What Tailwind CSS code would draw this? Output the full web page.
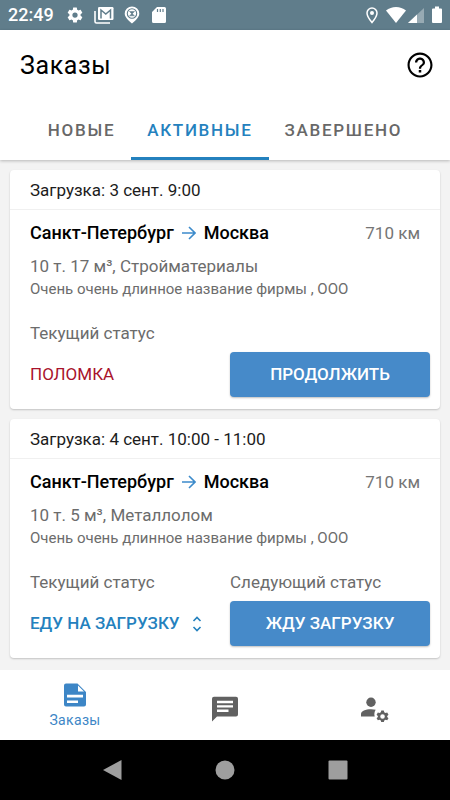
<!DOCTYPE html>
<html lang="ru">
<head>
<meta charset="utf-8">
<meta name="viewport" content="width=device-width, initial-scale=1">
<title>Заказы</title>
<script src="https://cdn.jsdelivr.net/npm/@tailwindcss/browser@4"></script>
</head>
<body class="flex min-h-screen flex-col bg-[#f3f3f3] font-[Roboto,sans-serif] text-[17px] text-[#1c1c1c]">

<!-- System status bar -->
<div class="flex h-[30px] items-center justify-between bg-[#607d8b] px-2 text-white">
  <div class="flex items-center gap-2.5">
    <span class="w-[48px] text-[18px] leading-[30px] font-medium">22:49</span>
    <svg class="size-[18px]" viewBox="0 0 24 24" fill="currentColor"><path d="M19.43 12.98c.04-.32.07-.64.07-.98s-.03-.66-.07-.98l2.11-1.65c.19-.15.24-.42.12-.64l-2-3.46c-.12-.22-.39-.3-.61-.22l-2.49 1c-.52-.4-1.08-.73-1.69-.98l-.38-2.65A.49.49 0 0 0 14 2h-4c-.25 0-.46.18-.49.42l-.38 2.65c-.61.25-1.17.59-1.69.98l-2.49-1c-.23-.09-.49 0-.61.22l-2 3.46c-.13.22-.07.49.12.64l2.11 1.65c-.04.32-.07.65-.07.98s.03.66.07.98l-2.11 1.65c-.19.15-.24.42-.12.64l2 3.46c.12.22.39.3.61.22l2.49-1c.52.4 1.08.73 1.69.98l.38 2.65c.03.24.24.42.49.42h4c.25 0 .46-.18.49-.42l.38-2.65c.61-.25 1.17-.59 1.69-.98l2.49 1c.23.09.49 0 .61-.22l2-3.46c.12-.22.07-.49-.12-.64zM12 15.5a3.5 3.5 0 1 1 0-7 3.5 3.5 0 0 1 0 7z"/></svg>
    <svg class="h-[18px] w-5" viewBox="0 0 20 18"><path d="M1 5v10.500a1.500 1.500 0 0 0 1.500 1.500H16" fill="none" stroke="currentColor" stroke-width="1.600"/><rect x="4" y="1" width="15.500" height="13" rx="1.200" fill="currentColor"/><path d="M7 12.500V4l4.800 4L16.500 4v8.500" fill="none" stroke="#607d8b" stroke-width="1.500"/></svg>
    <svg class="h-[18px] w-4" viewBox="0 0 16 18"><path d="M8 .5A7.300 7.300 0 0 0 .7 7.700C.7 12 8 17.500 8 17.500s7.300-5.500 7.300-9.800A7.300 7.300 0 0 0 8 .5z" fill="currentColor"/><circle cx="8" cy="7.500" r="4.700" fill="none" stroke="#607d8b" stroke-width="1.100"/><path d="M5.500 5.500h5L8 8zM5.500 9.800h5L8 7.500z" fill="#607d8b" stroke="#607d8b" stroke-width=".5"/></svg>
    <svg class="ml-0.5 h-[18px] w-[14px]" viewBox="0 0 14 18"><path d="M5 1h7.500A1.500 1.500 0 0 1 14 2.500v13a1.500 1.500 0 0 1-1.500 1.500h-11A1.500 1.500 0 0 1 0 15.500V6z" fill="currentColor"/><path d="M5.500 3v3M8.300 3v3M11 3v3" stroke="#607d8b" stroke-width="1.200"/></svg>
  </div>
  <div class="flex items-center">
    <svg class="mr-2 h-[18px] w-3" viewBox="0 0 12 18"><path d="M6 2a5 5 0 0 0-5 5c0 3.700 5 9.500 5 9.500S11 10.700 11 7a5 5 0 0 0-5-5z" fill="none" stroke="currentColor" stroke-width="1.500"/><circle cx="6" cy="7" r="2" fill="currentColor"/></svg>
    <svg class="mr-0.5 h-[18px] w-5" viewBox="0 0 20 18"><path d="M0 4.500C2.800 2.300 6.300 1 10 1s7.200 1.300 10 3.500L10 17z" fill="currentColor"/></svg>
    <svg class="mr-2 h-[18px] w-4" viewBox="0 0 16 18"><path d="M16 2v15H0z" fill="currentColor" opacity=".35"/><path d="M9 8.500V17H0z" fill="currentColor"/></svg>
    <svg class="h-[18px] w-2.5" viewBox="0 0 10 18"><path d="M3 .5h4v2h2a1 1 0 0 1 1 1V16a1 1 0 0 1-1 1H1a1 1 0 0 1-1-1V3.500a1 1 0 0 1 1-1h2z" fill="currentColor"/></svg>
  </div>
</div>

<!-- App bar with tabs -->
<header class="bg-white shadow-[0_1px_3px_rgba(0,0,0,0.25)]">
  <div class="flex h-[70px] items-center justify-between pr-[15px] pl-5">
    <h1 class="pt-0.5 text-[25px] font-normal tracking-wide text-black">Заказы</h1>
    <button type="button" aria-label="Справка" class="text-black">
      <svg class="size-[30px]" viewBox="0 0 24 24" fill="currentColor"><path d="M11 18h2v-2h-2v2zm1-16C6.480 2 2 6.480 2 12s4.480 10 10 10 10-4.480 10-10S17.520 2 12 2zm0 18.300c-4.580 0-8.300-3.720-8.300-8.300s3.720-8.300 8.300-8.300 8.300 3.720 8.300 8.300-3.720 8.300-8.300 8.300zM12 6c-2.210 0-4 1.790-4 4h1.800c0-1.200 1-2.200 2.200-2.200s2.200 1 2.200 2.200c0 2-3.100 1.750-3.100 5h1.800c0-2.250 3.100-2.500 3.100-5 0-2.210-1.790-4-4-4z"/></svg>
    </button>
  </div>
  <nav class="flex h-[60px] items-stretch justify-center font-medium tracking-widest text-[#686868]" aria-label="Статус заказов">
    <a href="#new" class="flex items-center border-b-3 border-transparent px-4 pt-1">НОВЫЕ</a>
    <a href="#active" aria-current="page" class="flex items-center border-b-3 border-[#2481be] px-4 pt-1 text-[#2481be]">АКТИВНЫЕ</a>
    <a href="#done" class="flex items-center border-b-3 border-transparent px-4 pt-1">ЗАВЕРШЕНО</a>
  </nav>
</header>

<!-- Orders -->
<main class="flex flex-1 flex-col gap-2.5 px-2.5 pt-2.5 pb-3">
  <article class="rounded bg-white shadow-[0_1px_2px_rgba(0,0,0,0.2)]">
    <h2 class="flex h-10 items-center border-b border-[#f0f0f0] px-5 pt-0.5">Загрузка: 3 сент. 9:00</h2>
    <div class="pt-2.5 pr-2.5 pb-3 pl-5">
      <div class="flex items-center justify-between pr-2.5 leading-[26px]">
        <p class="flex items-center gap-2 text-[18px] font-medium text-black">Санкт-Петербург
          <svg class="h-4 w-[14px]" viewBox="0 0 14 16" fill="none" stroke="#3d8bcb" stroke-width="1.600"><path d="M0 8h13M7 2l6 6-6 6"/></svg>
          Москва</p>
        <span class="text-[#757575]">710 км</span>
      </div>
      <p class="mt-2 leading-6 text-[#6c6c6c]">10 т. 17 м³, Стройматериалы</p>
      <p class="text-[15px] leading-[22px] text-[#6c6c6c]">Очень очень длинное название фирмы , ООО</p>
      <p class="mt-[21px] leading-6 text-[#6c6c6c]">Текущий статус</p>
      <div class="mt-[7px] grid grid-cols-2 items-center">
        <span class="text-[#a9132c]">ПОЛОМКА</span>
        <button type="button" class="h-[45px] rounded bg-[#468ac9] font-medium text-white shadow-[0_1px_2px_rgba(0,0,0,0.25)]">ПРОДОЛЖИТЬ</button>
      </div>
    </div>
  </article>

  <article class="rounded bg-white shadow-[0_1px_2px_rgba(0,0,0,0.2)]">
    <h2 class="flex h-10 items-center border-b border-[#f0f0f0] px-5 pt-0.5">Загрузка: 4 сент. 10:00 - 11:00</h2>
    <div class="pt-2.5 pr-2.5 pb-3 pl-5">
      <div class="flex items-center justify-between pr-2.5 leading-[26px]">
        <p class="flex items-center gap-2 text-[18px] font-medium text-black">Санкт-Петербург
          <svg class="h-4 w-[14px]" viewBox="0 0 14 16" fill="none" stroke="#3d8bcb" stroke-width="1.600"><path d="M0 8h13M7 2l6 6-6 6"/></svg>
          Москва</p>
        <span class="text-[#757575]">710 км</span>
      </div>
      <p class="mt-2 leading-6 text-[#6c6c6c]">10 т. 5 м³, Металлолом</p>
      <p class="text-[15px] leading-[22px] text-[#6c6c6c]">Очень очень длинное название фирмы , ООО</p>
      <div class="mt-[21px] grid grid-cols-2 leading-6 text-[#6c6c6c]">
        <label for="status">Текущий статус</label>
        <span>Следующий статус</span>
      </div>
      <div class="mt-[7px] grid grid-cols-2 items-center">
        <div class="flex items-center gap-3 text-[#2481be]">
          <select id="status" class="appearance-none bg-transparent font-medium"><option>ЕДУ НА ЗАГРУЗКУ</option></select>
          <svg class="h-4 w-2.5" viewBox="0 0 10 16" fill="none" stroke="currentColor" stroke-width="1.600"><path d="M1.500 5L5 1.500 8.500 5M1.500 11L5 14.500 8.500 11"/></svg>
        </div>
        <button type="button" class="h-[45px] rounded bg-[#468ac9] font-medium text-white shadow-[0_1px_2px_rgba(0,0,0,0.25)]">ЖДУ ЗАГРУЗКУ</button>
      </div>
    </div>
  </article>
</main>

<!-- Bottom navigation -->
<nav class="grid h-[70px] grid-cols-3 bg-white pt-2 text-[#616161]" aria-label="Разделы">
  <a href="#orders" aria-current="page" class="flex flex-col items-center gap-px pt-1 text-[14px] leading-[22px] tracking-wide text-[#3d86c6]">
    <svg class="h-[26px] w-6" viewBox="0 0 24 26"><path d="M3 1.500h11.500L23 10v12.500a2 2 0 0 1-2 2H3a2 2 0 0 1-2-2v-19a2 2 0 0 1 2-2z" fill="currentColor"/><path d="M15 3.500V9.500h6zM4 12.800h16v2.600H4zM4 18.500h11v2.600H4z" fill="#fff"/></svg>
    Заказы
  </a>
  <a href="#messages" aria-label="Сообщения" class="flex items-center justify-center">
    <svg class="h-[26px] w-[26px]" viewBox="0 0 26 26"><path d="M2 .800h22a2 2 0 0 1 2 2V18.500a2 2 0 0 1-2 2H5L0 25.500V2.800a2 2 0 0 1 2-2z" fill="currentColor"/><path d="M5 4.800h16v2.400H5zM5 9.200h16v2.400H5zM5 13.600h11.500v2.400H5z" fill="#fff"/></svg>
  </a>
  <a href="#profile" aria-label="Профиль" class="flex items-center justify-center">
    <svg class="h-[26px] w-7" viewBox="0 0 28 26" fill="currentColor"><circle cx="10" cy="6.200" r="4.700"/><path d="M0 20.500v-2.300C0 15 4.500 13.300 10 13.300c1.700 0 3.300.2 4.700.5-1.300 1.800-1.700 4.300-1 6.700z"/><path fill-rule="evenodd" d="M20.300 13.500h3l.5 2 1.500.9 2-.6 1.500 2.600-1.500 1.500v1.200l1.500 1.500-1.500 2.500-2-.6-1.500.9-.5 2h-3l-.5-2-1.500-.9-2 .6-1.500-2.500 1.500-1.500v-1.200l-1.500-1.500 1.500-2.600 2 .6 1.500-.9zM21.800 17.800a2.700 2.700 0 1 0 0 5.400 2.700 2.700 0 0 0 0-5.400z" transform="translate(3 3) scale(.85)"/></svg>
  </a>
</nav>

<!-- System navigation -->
<div class="flex h-[60px] items-center justify-center bg-black text-[#9e9e9e]">
  <div class="grid w-3/4 grid-cols-3 justify-items-center">
    <button type="button" aria-label="Назад"><svg class="size-5" viewBox="0 0 20 20" fill="currentColor"><path d="M18.500 0v20L0 10z"/></svg></button>
    <button type="button" aria-label="Домой"><svg class="size-5" viewBox="0 0 20 20" fill="currentColor"><circle cx="10" cy="10" r="9.500"/></svg></button>
    <button type="button" aria-label="Недавние"><svg class="size-5" viewBox="0 0 20 20" fill="currentColor"><rect x=".5" y=".5" width="19" height="19" rx="1"/></svg></button>
  </div>
</div>
</body>
</html>
